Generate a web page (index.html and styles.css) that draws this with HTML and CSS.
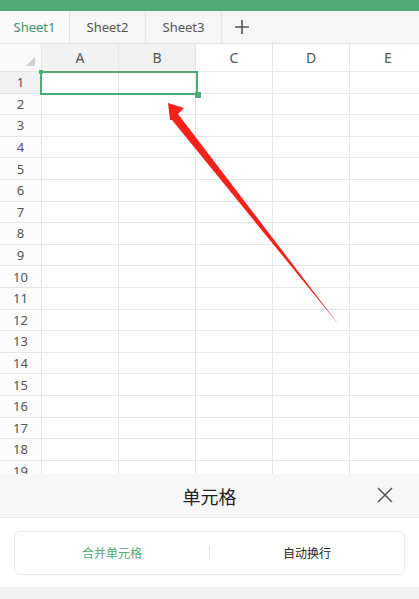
FILE: index.html
```html
<!DOCTYPE html>
<html>
<head>
    <title>Sheet</title>
    <link rel="stylesheet" href="styles.css">
</head>
<body>
    <div class="topbar"></div>

    <div class="tabs">
        <div class="tab active">Sheet1</div>
        <div class="tab">Sheet2</div>
        <div class="tab">Sheet3</div>
        <div class="tab add">
            <svg width="16" height="16" viewBox="0 0 16 16"><path d="M8 1v14M1 8h14" stroke="#555" stroke-width="1.6"/></svg>
        </div>
    </div>

    <div class="sheet">
        <div class="grid" id="grid"></div>
        <div class="selection"><span class="dot"></span><span class="handle"></span></div>
    </div>

    <div class="panel">
        <div class="panel-head">
            <span class="panel-title">单元格</span>
            <svg class="close" width="16" height="16" viewBox="0 0 16 16"><path d="M1 1l14 14M15 1L1 15" stroke="#555" stroke-width="1.5"/></svg>
        </div>
        <div class="panel-body">
            <div class="card">
                <div class="opt green">合并单元格</div>
                <div class="sep"></div>
                <div class="opt">自动换行</div>
            </div>
        </div>
        <div class="panel-foot"></div>
    </div>

    <!-- annotation arrow -->
    <svg class="arrow" width="419" height="599" viewBox="0 0 419 599">
        <polygon points="168,103 184,108 178,114 339,325 172,120 170,120" fill="#f5221b"/>
    </svg>

    <script>
        var grid = document.getElementById('grid');
        var cols = ['A', 'B', 'C', 'D', 'E'];
        var html = '<div class="corner"><span class="tri"></span></div>';
        cols.forEach(function (c, i) {
            html += '<div class="colhead' + (i < 2 ? ' sel' : '') + '">' + c + '</div>';
        });
        for (var r = 1; r <= 19; r++) {
            html += '<div class="rowhead' + (r == 1 ? ' sel' : '') + '">' + r + '</div>';
            for (var i = 0; i < cols.length; i++) html += '<div class="cell"></div>';
        }
        grid.innerHTML = html;
    </script>
</body>
</html>
```

FILE: styles.css
```css
body {
    margin: 0;
    width: 419px;
    height: 599px;
    overflow: hidden;
    position: relative;
    font-family: "Noto Sans", "Noto Sans CJK SC", sans-serif;
    background: #fff;
}

.topbar {
    height: 11px;
    background-color: #52a878;
}

.tabs {
    display: flex;
    height: 32px;
    background: #f6f6f6;
    border-bottom: 1px solid #e4e4e4;
}

.tab {
    display: flex;
    align-items: center;
    justify-content: center;
    border-right: 1px solid #e4e4e4;
    font-size: 13px;
    color: #555;
    width: 75px;
}

.tab.active {
    width: 69px;
    color: #3f9466;
    background: #fafafa;
}

.tab.add {
    width: 40px;
    border-right: none;
}

.sheet {
    position: relative;
    height: 430px;
    overflow: hidden;
}

.grid {
    display: grid;
    grid-template-columns: 42px repeat(5, 77px);
    grid-template-rows: 28px;
    grid-auto-rows: 21.6px;
    width: 427px;
}

.grid > div {
    border-right: 1px solid #e6e6e6;
    border-bottom: 1px solid #e6e6e6;
    box-sizing: border-box;
}

.corner {
    position: relative;
    background: #fafafa;
}

.corner .tri {
    position: absolute;
    right: 6px;
    bottom: 5px;
    width: 0;
    height: 0;
    border-left: 9px solid transparent;
    border-bottom: 9px solid #cfcfcf;
}

.colhead {
    display: flex;
    align-items: center;
    justify-content: center;
    font-size: 14px;
    color: #555;
    background: #fff;
}

.colhead.sel,
.rowhead.sel {
    background: #f2f2f2;
}

.rowhead {
    display: flex;
    align-items: center;
    justify-content: center;
    font-size: 13px;
    color: #555;
    background: #fcfcfc;
}

.selection {
    position: absolute;
    left: 40px;
    top: 27px;
    width: 158px;
    height: 24px;
    border: 2px solid #4fab78;
    box-sizing: border-box;
}

.selection .handle {
    position: absolute;
    right: -5px;
    bottom: -5px;
    width: 6px;
    height: 6px;
    background: #4fab78;
}

.selection .dot {
    position: absolute;
    left: -3px;
    top: -3px;
    width: 4px;
    height: 4px;
    background: #4fab78;
}

.panel {
    height: 125px;
    display: flex;
    flex-direction: column;
}

.panel-head {
    height: 43px;
    background: #f7f7f7;
    border-bottom: 1px solid #e8e8e8;
    display: flex;
    align-items: center;
    justify-content: center;
    position: relative;
}

.panel-title {
    font-size: 18px;
    color: #222;
}

.close {
    position: absolute;
    right: 26px;
    top: 13px;
}

.panel-body {
    background: #fff;
    padding: 13px 14px 12px;
}

.card {
    display: flex;
    align-items: center;
    height: 42px;
    border: 1px solid #ebebeb;
    border-radius: 6px;
}

.opt {
    flex: 1;
    text-align: center;
    font-size: 12px;
    color: #222;
}

.opt.green {
    color: #4fab78;
}

.sep {
    width: 1px;
    height: 14px;
    background: #e2e2e2;
}

.panel-foot {
    flex: 1;
    background: #f2f2f2;
}

.arrow {
    position: absolute;
    left: 0;
    top: 0;
    pointer-events: none;
}
```
